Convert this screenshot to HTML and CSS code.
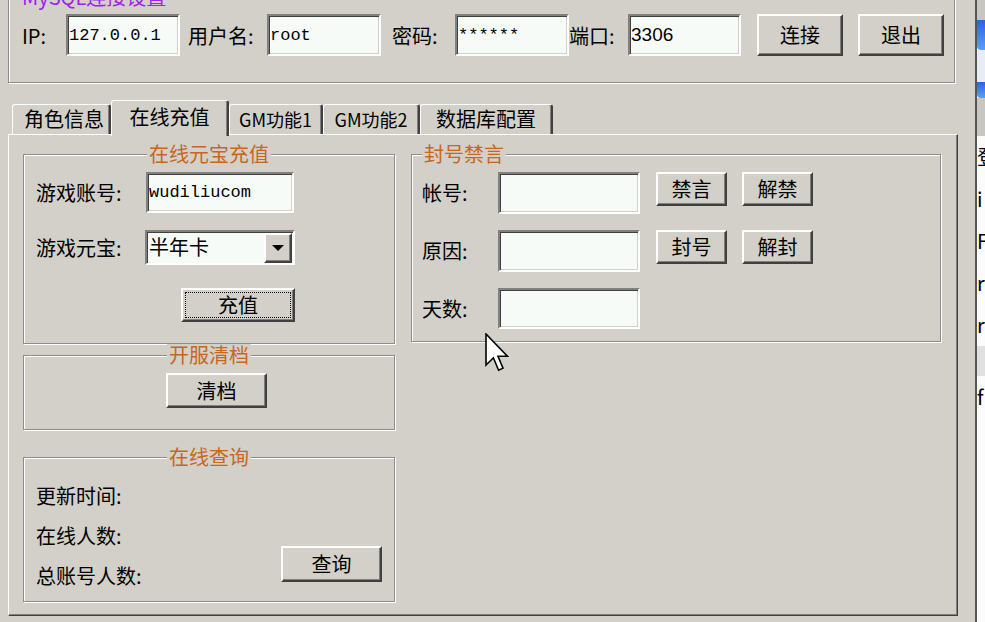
FILE: index.html
```html
<!DOCTYPE html>
<html lang="zh-CN">
<head>
    <meta charset="UTF-8">
    <meta name="viewport" content="width=device-width, initial-scale=1.0">
    <title>GM工具</title>
    <link rel="stylesheet" href="styles.css">
</head>
<body>
  <div class="screen">
    <div class="window">
      <fieldset class="group conn">
        <legend class="legend-conn">MySQL连接设置</legend>
        <div class="conn-row">
          <label class="lbl lbl-ip">IP:</label>
          <input class="field w114" type="text" value="127.0.0.1">
          <label class="lbl lbl-user">用户名:</label>
          <input class="field w114" type="text" value="root">
          <label class="lbl lbl-pass">密码:</label>
          <input class="field w114" type="text" value="******">
          <label class="lbl lbl-port">端口:</label>
          <input class="field field-sans w113" type="text" value="3306">
          <button class="btn btn-top btn-connect">连接</button>
          <button class="btn btn-top btn-exit">退出</button>
        </div>
      </fieldset>

      <div class="tabs">
        <div class="tab tab-role">角色信息</div>
        <div class="tab tab-active">在线充值</div>
        <div class="tab tab-gm1">GM功能1</div>
        <div class="tab tab-gm2">GM功能2</div>
        <div class="tab tab-db">数据库配置</div>
      </div>

      <div class="panel">
        <div class="col-left">
          <fieldset class="group g-charge">
            <legend class="legend-center">在线元宝充值</legend>
            <div class="form-row row-account">
              <label class="lbl lbl-wide">游戏账号:</label>
              <input class="field w148" type="text" value="wudiliucom">
            </div>
            <div class="form-row row-amount">
              <label class="lbl lbl-wide">游戏元宝:</label>
              <div class="combo">
                <span class="combo-text">半年卡</span>
                <span class="combo-btn"><span class="arrow"></span></span>
              </div>
            </div>
            <button class="btn btn-charge">充值</button>
          </fieldset>

          <fieldset class="group g-clear">
            <legend class="legend-center">开服清档</legend>
            <button class="btn btn-clear">清档</button>
          </fieldset>

          <fieldset class="group g-query">
            <legend class="legend-center">在线查询</legend>
            <div class="query-body">
              <div class="query-lines">
                <div>更新时间:</div>
                <div>在线人数:</div>
                <div>总账号人数:</div>
              </div>
              <button class="btn btn-query">查询</button>
            </div>
          </fieldset>
        </div>

        <div class="col-right">
          <fieldset class="group g-ban">
            <legend class="legend-left">封号禁言</legend>
            <div class="ban-row first">
              <label class="lbl lbl-ban">帐号:</label>
              <input class="field w142" type="text" value="">
              <button class="btn btn-small">禁言</button>
              <button class="btn btn-small btn-next">解禁</button>
            </div>
            <div class="ban-row">
              <label class="lbl lbl-ban">原因:</label>
              <input class="field w142" type="text" value="">
              <button class="btn btn-small">封号</button>
              <button class="btn btn-small btn-next">解封</button>
            </div>
            <div class="ban-row last">
              <label class="lbl lbl-ban">天数:</label>
              <input class="field w142 h41" type="text" value="">
            </div>
          </fieldset>
        </div>
      </div>
    </div>

    <div class="side">
      <div class="side-gray s20"></div>
      <div class="side-blue s30"></div>
      <div class="side-light s32"></div>
      <div class="side-blue s16"></div>
      <div class="side-gray s38"></div>
      <div class="side-text">
        <div class="side-line">登</div>
        <div class="side-line">i</div>
        <div class="side-line">F</div>
        <div class="side-line">r</div>
        <div class="side-line">r</div>
        <div class="side-band"></div>
        <div class="side-line">f</div>
      </div>
    </div>
  </div>

  <svg class="cursor" width="24" height="40" viewBox="0 0 12 20">
    <path d="M0.5 0.5 L0.5 16 L4.2 12.4 L6.8 18.6 L9 17.6 L6.5 11.6 L11.2 11.6 Z" fill="#fff" stroke="#000" stroke-width="0.8" stroke-linejoin="miter"/>
  </svg>
</body>
</html>
```

FILE: styles.css
```css
* {
    box-sizing: border-box;
}

body {
    margin: 0;
    background: #d2d0c8;
    font-family: "Noto Sans CJK SC", sans-serif;
    font-size: 20px;
    color: #000;
    overflow: hidden;
}

.screen {
    display: flex;
    height: 622px;
    overflow: hidden;
}

.window {
    width: 975px;
    flex: none;
}

/* group boxes: etched gray + white line */
.group {
    margin: 0;
    min-width: 0;
    border: 1px solid #8c8c8c;
    box-shadow: inset 1px 1px #fff, 1px 1px #fff;
}

.group legend {
    padding: 0 2px;
    line-height: 22px;
    color: #c8661c;
    background: #d2d0c8;
}

.legend-center {
    margin: 0 auto;
}

.legend-conn {
    color: #a020f0 !important;
    margin-left: -2px;
}

.conn {
    margin: -14px 0 0 8px;
    width: 947px;
    padding: 0 13px 26px 13px;
}

.conn-row {
    display: flex;
    align-items: center;
    height: 42px;
    margin-top: 6px;
}

.lbl {
    white-space: nowrap;
    flex: none;
}

.lbl-ip { width: 44px; }
.lbl-user { width: 79px; margin-left: 8px; }
.lbl-pass { width: 63px; margin-left: 11px; }
.lbl-port { width: 59px; }

/* edit fields */
.field {
    flex: none;
    height: 42px;
    margin: 0;
    padding: 0 1px;
    border: 2px solid;
    border-color: #808080 #fff #fff #808080;
    box-shadow: inset 1px 1px #404040, inset -1px -1px #d4d0c8;
    background: #f7fbf7;
    font-family: "Liberation Mono", monospace;
    font-size: 17px;
    color: #000;
    outline: none;
}

.field-sans {
    font-family: "Liberation Sans", sans-serif;
    font-size: 19px;
}

.w114 { width: 114px; }
.w113 { width: 113px; }
.w148 { width: 148px; }
.w142 { width: 142px; }
.h41 { height: 41px; }

/* buttons */
.btn {
    flex: none;
    margin: 0;
    padding: 0;
    background: #d2d0c8;
    border: 2px solid;
    border-color: #fff #404040 #404040 #fff;
    box-shadow: inset -1px -1px #808080;
    font-family: "Noto Sans CJK SC", sans-serif;
    font-size: 20px;
    color: #000;
    line-height: 1;
}

.btn-top {
    width: 86px;
    height: 42px;
}

.btn-connect { margin-left: 16px; }
.btn-exit { margin-left: 15px; }

/* tabs */
.tabs {
    display: flex;
    align-items: flex-end;
    height: 34px;
    margin: 17px 0 0 12px;
}

.tab {
    flex: none;
    height: 30px;
    border: 1px solid #fff;
    border-right: 2px solid #404040;
    border-bottom: none;
    border-radius: 3px 3px 0 0;
    box-shadow: inset -1px 0 #808080;
    line-height: 28px;
    text-align: center;
    white-space: nowrap;
}

.tab-role { width: 99px; padding-left: 6px; }
.tab-gm1 { width: 94px; font-size: 18px; }
.tab-gm2 { width: 97px; font-size: 18px; }
.tab-db { width: 133px; }

.tab-active {
    width: 118px;
    height: 36px;
    line-height: 32px;
    margin-bottom: -2px;
    position: relative;
    z-index: 1;
    background: #d2d0c8;
}

.panel {
    margin-left: 8px;
    width: 950px;
    height: 482px;
    border: 1px solid #fff;
    border-right-color: #404040;
    border-bottom-color: #404040;
    box-shadow: inset -1px -1px #808080;
    display: flex;
    gap: 16px;
    padding: 8px 0 0 14px;
}

.col-left {
    width: 372px;
    display: flex;
    flex-direction: column;
}

.col-right {
    width: 530px;
}

/* charge group */
.g-charge {
    padding: 0 12px 21px;
}

.form-row {
    display: flex;
    align-items: center;
}

.row-account {
    margin-top: 7px;
    height: 41px;
}

.row-account .field {
    height: 41px;
}

.row-amount {
    margin-top: 17px;
    height: 35px;
}

.lbl-wide {
    width: 110px;
}

.combo {
    flex: none;
    display: flex;
    width: 150px;
    height: 35px;
    margin-left: -1px;
    border: 2px solid;
    border-color: #808080 #fff #fff #808080;
    box-shadow: inset 1px 1px #404040;
    background: #f7fbf7;
    padding: 1px 1px 0 1px;
}

.combo-text {
    flex: 1;
    line-height: 28px;
    padding-left: 1px;
}

.combo-btn {
    width: 28px;
    height: 30px;
    border: 2px solid;
    border-color: #fff #404040 #404040 #fff;
    box-shadow: inset -1px -1px #808080;
    background: #d2d0c8;
    display: flex;
    align-items: center;
    justify-content: center;
}

.arrow {
    width: 0;
    height: 0;
    border-left: 6px solid transparent;
    border-right: 6px solid transparent;
    border-top: 6px solid #000;
}

.btn-charge {
    display: block;
    width: 114px;
    height: 34px;
    margin: 23px 0 0 145px;
    outline: 1px dotted #000;
    outline-offset: -5px;
}

/* clear group */
.g-clear {
    padding: 0 12px 21px;
}

.btn-clear {
    display: block;
    width: 101px;
    height: 35px;
    margin: 7px 0 0 130px;
}

/* query group */
.g-query {
    margin-top: 16px;
    padding: 0 12px 5px;
}

.query-body {
    display: flex;
    justify-content: space-between;
    align-items: flex-end;
    margin-top: 8px;
}

.query-lines {
    line-height: 40px;
}

.btn-query {
    width: 101px;
    height: 36px;
    margin-bottom: 14px;
}

/* ban group */
.g-ban {
    padding: 0 10px 12px;
}

.ban-row {
    display: flex;
    align-items: flex-start;
    height: 42px;
    margin-top: 16px;
}

.ban-row.first {
    margin-top: 7px;
}

.ban-row.last {
    height: 41px;
}

.lbl-ban {
    width: 76px;
    line-height: 42px;
}

.btn-small {
    width: 71px;
    height: 34px;
    margin-left: 16px;
}

.btn-small.btn-next {
    margin-left: 15px;
}

/* neighbour window strip */
.side {
    width: 10px;
    flex: none;
    border-left: 2px solid #555;
    background: #fbfbfb;
    overflow: hidden;
}

.side-gray { background: #c8c6c0; }
.side-light { background: #e8ecf4; }
.side-blue { background: linear-gradient(#2c62e0, #5aa0f0); border-radius: 0 0 0 4px; }

.s20 { height: 20px; }
.s30 { height: 30px; }
.s32 { height: 32px; }
.s16 { height: 16px; }
.s38 { height: 38px; }

.side-text {
    font-size: 20px;
    white-space: nowrap;
}

.side-line {
    height: 42px;
    line-height: 42px;
}

.side-band {
    height: 30px;
    background: #e0e0e0;
}

.cursor {
    position: absolute;
    left: 485px;
    top: 333px;
}
```
